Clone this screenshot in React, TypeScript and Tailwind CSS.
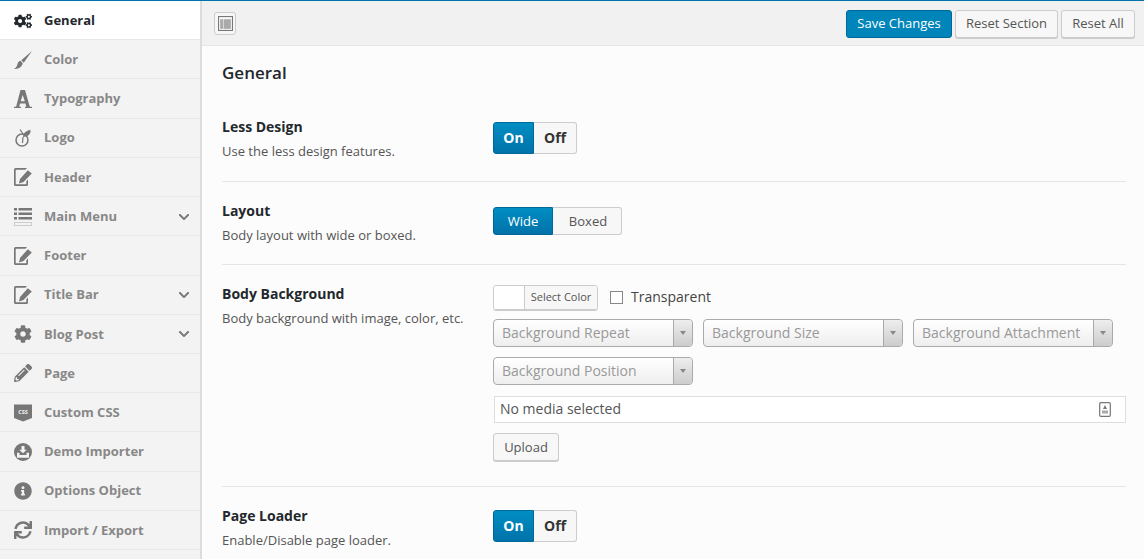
import { ReactNode } from 'react';
import { FaChevronDown, FaCog, FaCogs, FaInfoCircle, FaPencilAlt, FaSync } from 'react-icons/fa';

const BrushIcon = () => (
  <svg viewBox="0 0 18 18" className="w-[18px] h-[18px]" fill="currentColor">
    <path d="M18 0L9.700 11.800L7.300 9.300Z" />
    <path d="M6.600 9.800C4.500 10.200 3.700 12 3.200 14C2.800 15.800 1.400 17.300 0 18C3.500 18 7.300 17.200 8.800 12.500Z" />
  </svg>
);

const EditIcon = () => (
  <svg viewBox="0 0 18 18" className="w-[18px] h-[18px]">
    <path d="M13 0H1.500A1.500 1.500 0 0 0 0 1.500V16.500A1.500 1.500 0 0 0 1.500 18H12.500A1.500 1.500 0 0 0 14 16.500V11.500L12.300 13.200V16.300H1.700V1.700H11.400Z" fill="currentColor" />
    <path d="M13.800 2.300L17.800 5.500L9.500 14L5 15.500L6 11Z" fill="currentColor" />
  </svg>
);

const TypeIcon = () => (
  <svg viewBox="0 0 18 18" className="w-[18px] h-[18px]">
    <path d="M6.500 0H11L15.800 16.700H18V18H11V16.700H12.300L11.500 13.500H6L5.200 16.700H7V18H0V16.700H2.100ZM8.700 5L6.700 11.300H10.800Z" fill="currentColor" />
  </svg>
);

const LogoIcon = () => (
  <svg viewBox="0 0 18 18" className="w-[18px] h-[18px]" fill="none">
    <circle cx="8" cy="11" r="6" stroke="currentColor" strokeWidth="1.500" />
    <path d="M6 0.500L9 5" stroke="currentColor" strokeWidth="1.200" />
    <path d="M9 8C9 4 12 1.500 16.500 1C17 5 14 8 9 8Z" fill="currentColor" />
    <path d="M9 8L8.500 14" stroke="currentColor" strokeWidth="1.200" />
  </svg>
);

const MenuIcon = () => (
  <svg viewBox="0 0 18 18" className="w-[18px] h-[18px]" fill="currentColor">
    <rect x="0" y="0" width="3" height="2.500" />
    <rect x="4.500" y="0" width="13.500" height="2.500" />
    <rect x="0" y="4.500" width="3" height="2.500" />
    <rect x="4.500" y="4.500" width="13.500" height="2.500" />
    <rect x="0" y="9" width="3" height="2.500" />
    <rect x="4.500" y="9" width="13.500" height="2.500" />
    <rect x="0.500" y="14.500" width="17" height="3" fill="none" stroke="#ccc" />
  </svg>
);

const CssIcon = () => (
  <svg viewBox="0 0 18 18" className="w-[18px] h-[18px]">
    <path d="M0 0.500H18V14L9 17.500L0 14Z" fill="currentColor" />
    <text x="9" y="10" textAnchor="middle" fontSize="5.500" fontWeight="700" fill="#f3f3f3" fontFamily="'Open Sans', sans-serif">CSS</text>
  </svg>
);

const ImportIcon = () => (
  <svg viewBox="0 0 18 18" className="w-[18px] h-[18px]">
    <circle cx="9" cy="9" r="9" fill="currentColor" />
    <path d="M7.500 3H10.500V6.800H12.800L9 10.300L5.200 6.800H7.500Z" fill="#f3f3f3" />
    <path d="M3 9.800H5.500V12H12.500V9.800H15V14.800H3Z" fill="#f3f3f3" />
  </svg>
);

const items: { label: string; icon: ReactNode; arrow?: boolean; active?: boolean }[] = [
  { label: 'General', icon: <FaCogs size={18} />, active: true },
  { label: 'Color', icon: <BrushIcon /> },
  { label: 'Typography', icon: <TypeIcon /> },
  { label: 'Logo', icon: <LogoIcon /> },
  { label: 'Header', icon: <EditIcon /> },
  { label: 'Main Menu', icon: <MenuIcon />, arrow: true },
  { label: 'Footer', icon: <EditIcon /> },
  { label: 'Title Bar', icon: <EditIcon />, arrow: true },
  { label: 'Blog Post', icon: <FaCog size={18} />, arrow: true },
  { label: 'Page', icon: <FaPencilAlt size={18} /> },
  { label: 'Custom CSS', icon: <CssIcon /> },
  { label: 'Demo Importer', icon: <ImportIcon /> },
  { label: 'Options Object', icon: <FaInfoCircle size={18} /> },
  { label: 'Import / Export', icon: <FaSync size={18} /> },
];

function Field({ title, desc, children, last }: { title: string; desc: string; children: ReactNode; last?: boolean }) {
  return (
    <div className={`flex ${last ? '' : 'border-b border-[#e5e5e5]'}`}>
      <div className="w-[271px] shrink-0">
        <p className="text-[14px] leading-[20px] font-bold text-[#23282d]">{title}</p>
        <p className="text-[13px] leading-[20px] text-[#555] mt-[4px]">{desc}</p>
      </div>
      <div className="flex-1 min-w-0">{children}</div>
    </div>
  );
}

function Toggle() {
  return (
    <div className="flex w-[84px] h-[32px] text-[14px] font-bold">
      <div className="w-[41px] pb-[2px] flex items-center justify-center rounded-l-[3px] bg-gradient-to-b from-[#008ec2] to-[#0073aa] border border-[#006799] text-white">On</div>
      <div className="flex-1 pb-[2px] flex items-center justify-center rounded-r-[3px] bg-[#f7f7f7] border border-l-0 border-[#ccc] text-[#333]">Off</div>
    </div>
  );
}

function Select({ label }: { label: string }) {
  return (
    <div className="w-[200px] h-[28px] flex rounded-[4px] border border-[#aaa] bg-gradient-to-b from-white to-[#eee]">
      <span className="flex-1 pl-[8px] text-[14px] leading-[26px] text-[#999]">{label}</span>
      <span className="w-[19px] flex items-center justify-center border-l border-[#aaa] rounded-r-[4px] bg-gradient-to-b from-[#eee] to-[#ccc]">
        <span className="border-x-[3px] border-t-[4px] border-x-transparent border-t-[#888]" />
      </span>
    </div>
  );
}

export default function App() {
  return (
    <div className="w-[1144px] h-[559px] overflow-hidden flex bg-[#fcfcfc] border-t border-[#0073aa] font-['Open_Sans',sans-serif]">
      <div className="w-[202px] shrink-0 bg-[#f3f3f3] border-r-2 border-[#dcdcdc] h-[570px]">
        {items.map((item) => (
          <div
            key={item.label}
            className={`h-[39.23px] flex items-center pl-[14px] pr-[10px] pt-[0.8px] border-b border-[#e8e8e8] ${item.active ? 'bg-white text-[#23282d]' : 'text-[#777]'}`}
          >
            <span className="w-[18px] h-[18px] flex items-center justify-center shrink-0">{item.icon}</span>
            <span className={`ml-[12px] flex-1 text-[13px] font-bold ${item.active ? 'text-[#23282d]' : 'text-[#888]'}`}>{item.label}</span>
            {item.arrow && <FaChevronDown size={12} className="text-[#777]" />}
          </div>
        ))}
      </div>

      <div className="flex-1 min-w-0">
        <div className="h-[45px] flex items-center justify-between pl-[12px] pr-[9px] bg-[#f1f1f1] border-b border-[#e5e5e5]">
          <div className="w-[22px] h-[23px] flex items-center justify-center rounded-[3px] border border-[#ccc] bg-[#f7f7f7]">
            <svg viewBox="0 0 14 14" className="w-[15px] h-[15px]" fill="none">
              <rect x="0.500" y="0.500" width="13" height="13" stroke="#777" />
              <rect x="2" y="3" width="3" height="9" fill="#aaa" />
              <rect x="5.500" y="3" width="6.500" height="9" fill="#aaa" />
            </svg>
          </div>
          <div className="flex gap-[3px] text-[13px] mt-[1px]">
            <div className="h-[28px] w-[106px] flex items-center justify-center rounded-[3px] bg-[#0085ba] border border-[#006799] text-white">Save Changes</div>
            <div className="h-[28px] w-[103px] flex items-center justify-center rounded-[3px] bg-[#f7f7f7] border border-[#ccc] text-[#555] shadow-[0_1px_0_#ccc]">Reset Section</div>
            <div className="h-[28px] w-[74px] flex items-center justify-center rounded-[3px] bg-[#f7f7f7] border border-[#ccc] text-[#555] shadow-[0_1px_0_#ccc]">Reset All</div>
          </div>
        </div>

        <div className="ml-[20px] mr-[18px]">
          <h2 className="text-[17px] leading-[24px] font-semibold text-[#23282d] mt-[15px] mb-[32px]">General</h2>

          <Field title="Less Design" desc="Use the less design features.">
            <div className="pt-[5px] pb-[27px]"><Toggle /></div>
          </Field>

          <div className="pt-[19px]">
            <Field title="Layout" desc="Body layout with wide or boxed.">
              <div className="pt-[6px] pb-[29px] flex text-[13px]">
                <div className="w-[60px] h-[28px] pt-[1px] flex items-center justify-center rounded-l-[3px] bg-gradient-to-b from-[#008ec2] to-[#0073aa] border border-[#006799] text-white">Wide</div>
                <div className="w-[69px] h-[28px] pt-[1px] pl-[2px] flex items-center justify-center rounded-r-[3px] bg-[#f7f7f7] border border-l-0 border-[#ccc] text-[#555]">Boxed</div>
              </div>
            </Field>
          </div>

          <div className="pt-[19px]">
            <Field title="Body Background" desc="Body background with image, color, etc.">
              <div className="pt-[1px] pb-[25px]">
                <div className="flex items-center h-[25px]">
                  <div className="w-[105px] h-[25px] flex rounded-[3px] border border-[#ccc] shadow-[0_1px_0_#ccc] overflow-hidden">
                    <span className="w-[31px] bg-white border-r border-[#ccc]" />
                    <span className="flex-1 bg-[#f7f7f7] text-[11px] leading-[21px] text-center text-[#555]">Select Color</span>
                  </div>
                  <span className="ml-[12px] w-[13px] h-[13px] border border-[#888] bg-white" />
                  <span className="ml-[8px] pb-[2px] text-[14px] text-[#444]">Transparent</span>
                </div>
                <div className="flex flex-wrap gap-[10px] mt-[9px]">
                  <Select label="Background Repeat" />
                  <Select label="Background Size" />
                  <Select label="Background Attachment" />
                  <Select label="Background Position" />
                </div>
                <div className="ml-[1px] mt-[11px] h-[27px] flex items-center justify-between pl-[5px] pr-[14px] pb-[2px] bg-white border border-[#ddd] text-[14px] text-[#555]">
                  No media selected
                  <svg viewBox="0 0 12 15" className="w-[12px] h-[15px] mt-[2px]" fill="none">
                    <rect x="0.700" y="0.700" width="10.600" height="13.600" rx="1" stroke="#777" strokeWidth="1.200" />
                    <path d="M6 3L8 7H4Z" fill="#777" />
                    <rect x="3" y="8.500" width="6" height="3" fill="#aaa" />
                  </svg>
                </div>
                <div className="mt-[10px] w-[66px] h-[28px] pt-[1px] flex items-center justify-center rounded-[3px] bg-[#f7f7f7] border border-[#ccc] shadow-[0_1px_0_#ccc] text-[13px] text-[#555]">Upload</div>
              </div>
            </Field>
          </div>

          <div className="pt-[19px]">
            <Field title="Page Loader" desc="Enable/Disable page loader." last>
              <div className="pt-[4px]"><Toggle /></div>
            </Field>
          </div>
        </div>
      </div>
    </div>
  );
}
